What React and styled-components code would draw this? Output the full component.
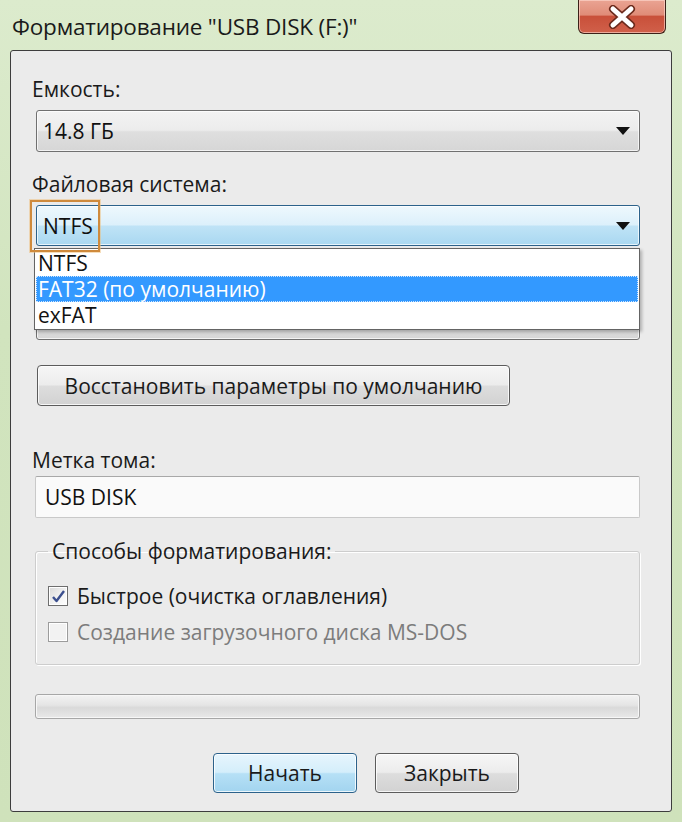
import React from "react";
import styled, { createGlobalStyle } from "styled-components";

const GlobalStyle = createGlobalStyle`
  html, body {
    margin: 0;
    padding: 0;
    background: #d3e5c1;
  }
  * {
    box-sizing: border-box;
  }
`;

const FONT = `"Open Sans", "DejaVu Sans", sans-serif`;

const Window = styled.div`
  width: 682px;
  height: 822px;
  background: linear-gradient(180deg, #dcebcd 0%, #d1e4be 40%, #cfe2bb 100%);
  font-family: ${FONT};
  color: #111;
  display: flex;
  flex-direction: column;
  padding: 0 10px 10px 10px;
`;

const TitleBar = styled.div`
  height: 50px;
  display: flex;
  align-items: flex-start;
  justify-content: space-between;
`;

const Title = styled.div`
  font-size: 22.5px;
  padding-top: 11px;
  padding-left: 2px;
  letter-spacing: -0.2px;
  color: #1a1a1a;
`;

const CloseButton = styled.div`
  width: 88px;
  height: 34px;
  margin-right: 6px;
  border: 1px solid #3b2018;
  border-top: none;
  border-radius: 0 0 6px 6px;
  background: linear-gradient(
    180deg,
    #eaa493 0%,
    #e08c78 45%,
    #c9503a 50%,
    #d0604a 100%
  );
  box-shadow: inset 0 0 0 1px rgba(255, 220, 210, 0.6);
  display: flex;
  align-items: center;
  justify-content: center;
`;

const Panel = styled.div`
  flex: 1;
  background: #ebebeb;
  border: 1px solid #3d3d3d;
  border-radius: 3px;
  padding: 25px 31px 0 21px;
  display: flex;
  flex-direction: column;
`;

const Label = styled.div`
  font-size: 21px;
  line-height: 26px;
  margin-bottom: ${(p) => p.$gap || 8}px;
  color: #1a1a1a;
`;

const ComboWrap = styled.div`
  position: relative;
  margin-left: 4px;
  margin-top: ${(p) => p.$top || 0}px;
  margin-bottom: ${(p) => p.$gap || 0}px;
`;

const Combo = styled.div`
  height: ${(p) => p.$h || 42}px;
  border: 1px solid ${(p) => (p.$active ? "#2c628b" : "#707070")};
  border-radius: 3px;
  background: ${(p) =>
    p.$active
      ? "linear-gradient(180deg, #eef8fd 0%, #dcf0fb 48%, #bfe3f6 52%, #a9d8f1 100%)"
      : "linear-gradient(180deg, #f3f3f3 0%, #ececec 48%, #dfdfdf 52%, #d6d6d6 100%)"};
  box-shadow: inset 0 0 0 1px rgba(255, 255, 255, 0.7);
  display: flex;
  align-items: center;
  justify-content: space-between;
  padding: 0 8px 0 6px;
  font-size: 21px;
`;

const FocusBox = styled.div`
  position: absolute;
  left: -6px;
  top: -5px;
  width: 70px;
  height: 52px;
  border: 2px solid #cf8a3c;
  box-shadow: 0 0 0 1px rgba(240, 190, 120, 0.5);
  pointer-events: none;
  z-index: 3;
`;

const Arrow = () => (
  <svg width="16" height="10" viewBox="0 0 16 10">
    <path d="M1 1 L15 1 L8 9 Z" fill="#111" />
  </svg>
);

const DropList = styled.div`
  position: absolute;
  left: -2px;
  top: 43px;
  width: 606px;
  background: #fff;
  border: 1px solid #646464;
  box-shadow: 2px 2px 3px rgba(0, 0, 0, 0.25);
  z-index: 2;
  padding: 1px;
`;

const DropItem = styled.div`
  height: 26px;
  line-height: 26px;
  font-size: 21px;
  padding-left: 2px;
  color: ${(p) => (p.$selected ? "#fff" : "#111")};
  background: ${(p) => (p.$selected ? "#3399ff" : "transparent")};
  outline: ${(p) => (p.$selected ? "1px dotted #cfe6ff" : "none")};
  outline-offset: -1px;
`;

const PushButton = styled.div`
  height: ${(p) => p.$h || 41}px;
  width: ${(p) => p.$w}px;
  border: 1px solid ${(p) => (p.$primary ? "#2c628b" : "#5c5c5c")};
  border-radius: 4px;
  background: ${(p) =>
    p.$primary
      ? "linear-gradient(180deg, #e7f5fd 0%, #d4eefb 48%, #b6e0f6 52%, #a2d4ef 100%)"
      : "linear-gradient(180deg, #f6f6f6 0%, #ececec 48%, #dddddd 52%, #d2d2d2 100%)"};
  box-shadow: inset 0 0 0 1px rgba(255, 255, 255, 0.8);
  display: flex;
  align-items: center;
  justify-content: center;
  font-size: 21px;
  color: #1a1a1a;
`;

const RestoreRow = styled.div`
  margin-left: 5px;
  margin-top: 25px;
  margin-bottom: 41px;
`;

const TextInput = styled.div`
  height: 42px;
  margin-left: 3px;
  background: #fafafa;
  border: 1px solid #c9c9c9;
  border-top-color: #a8a8a8;
  border-radius: 2px;
  display: flex;
  align-items: center;
  padding-left: 9px;
  font-size: 21px;
  margin-bottom: 20px;
`;

const GroupBox = styled.fieldset`
  margin: 0 0 0 3px;
  height: 127px;
  border: 1px solid #cdcdcd;
  border-radius: 3px;
  padding: 18px 12px 0 12px;
  box-shadow: inset 1px 1px 0 #fff, 1px 1px 0 #fff;
`;

const GroupLegend = styled.legend`
  font-size: 21px;
  line-height: 26px;
  padding: 0 4px;
  color: #1a1a1a;
`;

const CheckRow = styled.div`
  display: flex;
  align-items: center;
  gap: 9px;
  height: 28px;
  margin-bottom: 8px;
  font-size: 21px;
  color: ${(p) => (p.$disabled ? "#7c7c7c" : "#1a1a1a")};
`;

const Box = styled.div`
  width: 20px;
  height: 20px;
  border: 1px solid ${(p) => (p.$disabled ? "#9c9c9c" : "#6e6e6e")};
  background: ${(p) =>
    p.$disabled
      ? "#f2f2f2"
      : "linear-gradient(135deg, #d8d8d8 0%, #f4f4f4 60%, #ffffff 100%)"};
  box-shadow: inset 0 0 0 1px #fff;
  display: flex;
  align-items: center;
  justify-content: center;
`;

const Progress = styled.div`
  height: 25px;
  margin: 29px 0 34px 3px;
  border: 1px solid #a7a7a7;
  border-radius: 3px;
  background: linear-gradient(180deg, #f3f3f3 0%, #e4e4e4 45%, #d9d9d9 55%, #e9e9e9 100%);
  box-shadow: inset 0 0 0 1px #f7f7f7;
`;

const Footer = styled.div`
  display: flex;
  gap: 18px;
  padding-left: 181px;
`;

const Check = () => (
  <svg width="15" height="15" viewBox="0 0 15 15">
    <path
      d="M2 8 L5.5 12 L13 2"
      fill="none"
      stroke="#3b4f8e"
      strokeWidth="2.4"
      strokeLinejoin="round"
    />
  </svg>
);

export default function App() {
  return (
    <>
      <GlobalStyle />
      <Window>
        <TitleBar>
          <Title>Форматирование "USB DISK (F:)"</Title>
          <CloseButton>
            <svg width="28" height="24" viewBox="0 0 28 24">
              <path
                d="M5 4 L23 20 M23 4 L5 20"
                stroke="#6b2a1c"
                strokeWidth="8"
                strokeLinecap="round"
              />
              <path
                d="M5 4 L23 20 M23 4 L5 20"
                stroke="#fff"
                strokeWidth="5"
                strokeLinecap="round"
              />
            </svg>
          </CloseButton>
        </TitleBar>
        <Panel>
          <Label>Емкость:</Label>
          <ComboWrap $gap={19}>
            <Combo>
              <span>14.8 ГБ</span>
              <Arrow />
            </Combo>
          </ComboWrap>

          <Label>Файловая система:</Label>
          <ComboWrap>
            <Combo $active $h={41}>
              <span>NTFS</span>
              <Arrow />
            </Combo>
            <FocusBox />
            <DropList>
              <DropItem>NTFS</DropItem>
              <DropItem $selected>FAT32 (по умолчанию)</DropItem>
              <DropItem>exFAT</DropItem>
            </DropList>
          </ComboWrap>

          {/* cluster size combo, hidden behind the open list */}
          <ComboWrap $top={53}>
            <Combo $h={41} />
          </ComboWrap>

          <RestoreRow>
            <PushButton $w={473} $h={41}>
              Восстановить параметры по умолчанию
            </PushButton>
          </RestoreRow>

          <Label $gap={3}>Метка тома:</Label>
          <TextInput>USB DISK</TextInput>

          <GroupBox>
            <GroupLegend>Способы форматирования:</GroupLegend>
            <CheckRow>
              <Box>
                <Check />
              </Box>
              Быстрое (очистка оглавления)
            </CheckRow>
            <CheckRow $disabled>
              <Box $disabled />
              Создание загрузочного диска MS-DOS
            </CheckRow>
          </GroupBox>

          <Progress />

          <Footer>
            <PushButton $w={144} $h={40} $primary>
              Начать
            </PushButton>
            <PushButton $w={144} $h={40}>
              Закрыть
            </PushButton>
          </Footer>
        </Panel>
      </Window>
    </>
  );
}
